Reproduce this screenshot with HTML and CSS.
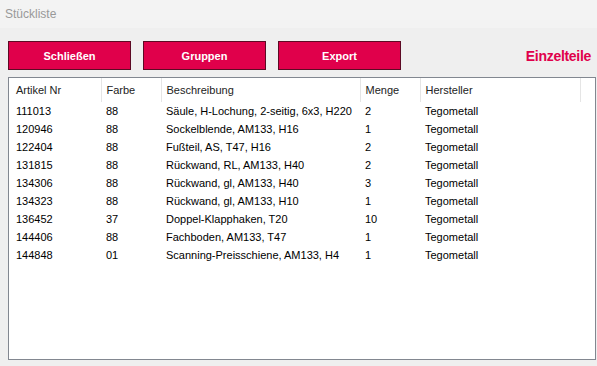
FILE: index.html
```html
<!DOCTYPE html>
<html lang="de">
<head>
    <meta charset="UTF-8">
    <meta name="viewport" content="width=device-width, initial-scale=1.0">
    <title>Stückliste</title>
    <link rel="stylesheet" href="styles.css">
</head>
<body>

<div class="titlebar">Stückliste</div>

<div class="toolbar">
    <button class="btn">Schließen</button>
    <button class="btn">Gruppen</button>
    <button class="btn">Export</button>
    <span class="mode">Einzelteile</span>
</div>

<!-- Teileliste -->
<div class="list">
    <table>
        <colgroup>
            <col class="c-nr">
            <col class="c-farbe">
            <col class="c-text">
            <col class="c-menge">
            <col class="c-herst">
            <col>
        </colgroup>
        <thead>
            <tr>
                <th>Artikel Nr</th>
                <th>Farbe</th>
                <th>Beschreibung</th>
                <th>Menge</th>
                <th>Hersteller</th>
                <th class="filler"></th>
            </tr>
        </thead>
        <tbody>
            <tr><td>111013</td><td>88</td><td>Säule, H-Lochung, 2-seitig, 6x3, H220</td><td>2</td><td>Tegometall</td><td></td></tr>
            <tr><td>120946</td><td>88</td><td>Sockelblende, AM133, H16</td><td>1</td><td>Tegometall</td><td></td></tr>
            <tr><td>122404</td><td>88</td><td>Fußteil, AS, T47, H16</td><td>2</td><td>Tegometall</td><td></td></tr>
            <tr><td>131815</td><td>88</td><td>Rückwand, RL, AM133, H40</td><td>2</td><td>Tegometall</td><td></td></tr>
            <tr><td>134306</td><td>88</td><td>Rückwand, gl, AM133, H40</td><td>3</td><td>Tegometall</td><td></td></tr>
            <tr><td>134323</td><td>88</td><td>Rückwand, gl, AM133, H10</td><td>1</td><td>Tegometall</td><td></td></tr>
            <tr><td>136452</td><td>37</td><td>Doppel-Klapphaken, T20</td><td>10</td><td>Tegometall</td><td></td></tr>
            <tr><td>144406</td><td>88</td><td>Fachboden, AM133, T47</td><td>1</td><td>Tegometall</td><td></td></tr>
            <tr><td>144848</td><td>01</td><td>Scanning-Preisschiene, AM133, H4</td><td>1</td><td>Tegometall</td><td></td></tr>
        </tbody>
    </table>
</div>

</body>
</html>
```

FILE: styles.css
```css
body {
    font-family: 'Liberation Sans', Arial, sans-serif;
    margin: 0;
    padding: 0;
    background-color: #efefef;
    color: #000;
}

.titlebar {
    height: 28px;
    line-height: 28px;
    padding-left: 5px;
    font-size: 12px;
    color: #999;
    background-color: #f3f3f3;
}

.toolbar {
    display: flex;
    align-items: center;
    gap: 12px;
    margin: 13px 0 0 8px;
    padding-right: 6px;
}

.btn {
    width: 123px;
    height: 29px;
    padding: 0;
    border: 1px solid #5c0a24;
    background-color: #e0004b;
    color: white;
    font-family: inherit;
    font-size: 11px;
    font-weight: bold;
}

.mode {
    margin-left: auto;
    font-size: 14px;
    font-weight: bold;
    letter-spacing: -0.3px;
    color: #e0004b;
}

.list {
    margin: 7px 1px 6px 8px;
    height: 281px;
    border: 1px solid #828790;
    background: white;
    overflow: hidden;
}

table {
    width: 100%;
    table-layout: fixed;
    border-collapse: collapse;
    font-size: 11px;
}

.c-nr { width: 92px; }
.c-farbe { width: 60px; }
.c-text { width: 199px; }
.c-menge { width: 60px; }
.c-herst { width: 160px; }

th {
    height: 24px;
    padding: 0 0 0 5px;
    text-align: left;
    font-weight: normal;
    color: #222;
    border-right: 1px solid #e5e5e5;
}

th:first-child, td:first-child {
    padding-left: 7px;
}

th.filler {
    border-right: none;
}

td {
    height: 18px;
    padding: 0 0 0 5px;
    white-space: nowrap;
}
```
